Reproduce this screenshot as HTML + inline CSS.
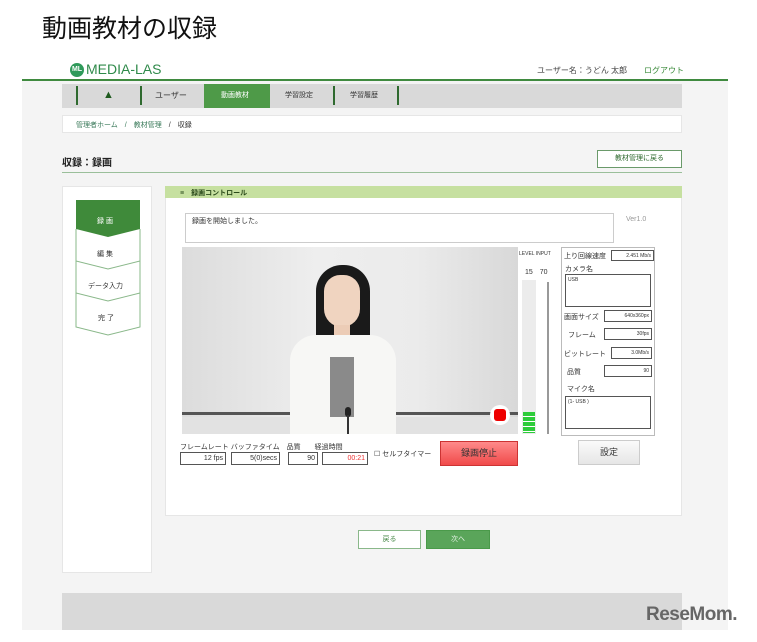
<!DOCTYPE html>
<html><head><meta charset="utf-8"><style>
*{margin:0;padding:0;box-sizing:border-box}
body{width:757px;height:642px;background:#fff;position:relative;overflow:hidden;font-family:"Liberation Sans","Noto Sans CJK JP",sans-serif;color:#333}
.a{position:absolute}
.t{font-size:8px;white-space:nowrap}
.inp{position:absolute;border:1.5px solid #555;background:#fff;font-size:7px;text-align:right;padding-right:2px;line-height:11px}
</style></head><body>
<div class="a" style="left:42px;top:9px;font-size:25px;color:#111;font-family:'Noto Sans CJK JP',sans-serif">動画教材の収録</div>
<div class="a" style="left:22px;top:80px;width:706px;height:550px;background:#f4f4f4"></div>
<div class="a" style="left:22px;top:79px;width:706px;height:2px;background:#3f8a3f"></div>
<!-- logo -->
<div class="a" style="left:70px;top:63px;width:14px;height:14px;border-radius:50%;background:#2f9a5a;color:#fff;font-size:7px;line-height:14px;text-align:center;font-weight:bold">ML</div>
<div class="a" style="left:86px;top:61px;font-size:14px;color:#2f8a4a">MEDIA-LAS</div>
<div class="a t" style="left:537px;top:65px;font-size:8px;color:#444">ユーザー名：うどん 太郎</div>
<div class="a t" style="left:644px;top:65px;font-size:8px;color:#3a8a3a">ログアウト</div>
<!-- nav -->
<div class="a" style="left:62px;top:84px;width:620px;height:24px;background:#d9d9d9"></div>
<div class="a" style="left:204px;top:84px;width:66px;height:24px;background:#4e9a48"></div>
<div class="a" style="left:76px;top:86px;width:2px;height:19px;background:#2f6a2f"></div>
<div class="a" style="left:140px;top:86px;width:2px;height:19px;background:#2f6a2f"></div>
<div class="a" style="left:333px;top:86px;width:2px;height:19px;background:#2f6a2f"></div>
<div class="a" style="left:397px;top:86px;width:2px;height:19px;background:#2f6a2f"></div>
<div class="a" style="left:103px;top:89px;color:#1e5a1e;font-size:11px">&#9650;</div>
<div class="a t" style="left:155px;top:90px">ユーザー</div>
<div class="a t" style="left:221px;top:90px;color:#fff;font-size:7px">動画教材</div>
<div class="a t" style="left:285px;top:90px;font-size:7px">学習設定</div>
<div class="a t" style="left:350px;top:90px;font-size:7px">学習履歴</div>
<!-- breadcrumb -->
<div class="a" style="left:62px;top:115px;width:620px;height:18px;background:#fff;border:1px solid #e6e6e6"></div>
<div class="a t" style="left:76px;top:120px;font-size:7px;color:#3a7a5a">管理者ホーム　/　教材管理　<span style="color:#333">/　収録</span></div>
<!-- title -->
<div class="a t" style="left:62px;top:154px;font-size:10px;font-weight:bold;color:#222">収録：録画</div>
<div class="a" style="left:62px;top:172px;width:620px;height:1px;background:#9abf9a"></div>
<div class="a t" style="left:597px;top:150px;width:85px;height:18px;background:#fff;border:1px solid #6a9a6a;font-size:7px;line-height:16px;text-align:center;color:#2f6a2f">教材管理に戻る</div>
<!-- left nav -->
<div class="a" style="left:62px;top:186px;width:90px;height:387px;background:#fff;border:1px solid #e6e6e6"></div>
<svg class="a" style="left:75px;top:199px" width="66" height="140">
<polygon points="1,1 65,1 65,30 33,38 1,30" fill="#3f8a3a"/>
<g fill="none" stroke="#8ab88a" stroke-width="1">
<polyline points="1,30 1,62 33,70 65,62 65,30"/>
<polyline points="1,62 1,94 33,102 65,94 65,62"/>
<polyline points="1,94 1,128 33,136 65,128 65,94"/>
</g></svg>
<div class="a t" style="left:97px;top:216px;color:#fff;font-size:7px">録 画</div>
<div class="a t" style="left:97px;top:249px;font-size:7px">編 集</div>
<div class="a t" style="left:88px;top:281px;font-size:7px">データ入力</div>
<div class="a t" style="left:98px;top:313px;font-size:7px">完 了</div>
<!-- main panel -->
<div class="a" style="left:165px;top:186px;width:517px;height:330px;background:#fff;border:1px solid #e6e6e6"></div>
<div class="a" style="left:165px;top:186px;width:517px;height:12px;background:#c6e0a0"></div>
<div class="a t" style="left:180px;top:188px;font-size:7px;font-weight:bold;color:#2a4a1a">≡　録画コントロール</div>
<div class="a" style="left:185px;top:213px;width:429px;height:30px;border:1px solid #ccc"></div>
<div class="a t" style="left:192px;top:216px;font-size:7px">録画を開始しました。</div>
<div class="a t" style="left:626px;top:216px;font-size:7px;color:#999">Ver1.0</div>
<!-- video -->
<div class="a" style="left:182px;top:247px;width:336px;height:187px;background:linear-gradient(90deg,#dcdcdc,#eeeeee 40%,#ebebeb 70%,#d8d8d8);overflow:hidden">
 <div class="a" style="left:0;top:165px;width:336px;height:3px;background:#555"></div>
 <div class="a" style="left:0;top:170px;width:336px;height:17px;background:#e2e2e2"></div>
 <div class="a" style="left:134px;top:18px;width:54px;height:80px;background:#1a1a1a;border-radius:26px 26px 8px 8px"></div>
 <div class="a" style="left:142px;top:28px;width:36px;height:52px;background:#f0d4c0;border-radius:18px 18px 20px 20px"></div>
 <div class="a" style="left:152px;top:78px;width:16px;height:14px;background:#ecccb6"></div>
 <div class="a" style="left:108px;top:88px;width:106px;height:110px;background:#f7f7f5;border-radius:26px 26px 0 0"></div>
 <div class="a" style="left:148px;top:110px;width:24px;height:60px;background:#8a8a8a"></div>
 <div class="a" style="left:163px;top:160px;width:6px;height:10px;background:#222;border-radius:3px"></div>
 <div class="a" style="left:165px;top:168px;width:2px;height:20px;background:#333"></div>
 <div class="a" style="left:308px;top:158px;width:20px;height:20px;border-radius:50%;background:#fff"></div>
 <div class="a" style="left:312px;top:162px;width:12px;height:12px;border-radius:3px;background:#e00"></div>
</div>
<!-- meters -->
<div class="a t" style="left:519px;top:251px;font-size:5px">LEVEL INPUT</div>
<div class="a t" style="left:525px;top:267px;font-size:7px">15　70</div>
<div class="a" style="left:522px;top:280px;width:14px;height:154px;background:#ececec"></div>
<div class="a" style="left:523px;top:412px;width:12px;height:21px;background:repeating-linear-gradient(#2dcc3a 0 4px,#fff 4px 5px)"></div>
<div class="a" style="left:547px;top:282px;width:2px;height:152px;background:#999"></div>
<!-- settings -->
<div class="a" style="left:561px;top:247px;width:94px;height:189px;border:1px solid #bbb;background:#fff"></div>
<div class="a t" style="left:564px;top:251px;font-size:7px">上り回線速度</div>
<div class="inp" style="left:611px;top:250px;width:43px;height:11px;font-size:5px">2.451 Mb/s</div>
<div class="a t" style="left:565px;top:264px;font-size:7px">カメラ名</div>
<div class="inp" style="left:565px;top:274px;width:86px;height:33px;text-align:left;padding-left:2px;font-size:5px">USB</div>
<div class="a t" style="left:564px;top:312px;font-size:7px">画面サイズ</div>
<div class="inp" style="left:604px;top:310px;width:48px;height:12px;font-size:5px">640x360px</div>
<div class="a t" style="left:568px;top:330px;font-size:7px">フレーム</div>
<div class="inp" style="left:604px;top:328px;width:48px;height:12px;font-size:5px">30fps</div>
<div class="a t" style="left:564px;top:349px;font-size:7px">ビットレート</div>
<div class="inp" style="left:611px;top:347px;width:41px;height:12px;font-size:5px">3.0Mb/s</div>
<div class="a t" style="left:567px;top:367px;font-size:7px">品質</div>
<div class="inp" style="left:604px;top:365px;width:48px;height:12px;font-size:5px">90</div>
<div class="a t" style="left:567px;top:384px;font-size:7px">マイク名</div>
<div class="inp" style="left:565px;top:396px;width:86px;height:33px;text-align:left;padding-left:2px;font-size:5px">(1- USB )</div>
<!-- controls -->
<div class="a t" style="left:180px;top:442px;font-size:7px">フレームレート バッファタイム　品質　　経過時間</div>
<div class="inp" style="left:180px;top:452px;width:46px;height:13px;font-size:7px">12 fps</div>
<div class="inp" style="left:231px;top:452px;width:49px;height:13px;font-size:7px">5(0)secs</div>
<div class="inp" style="left:288px;top:452px;width:30px;height:13px;font-size:7px">90</div>
<div class="inp" style="left:322px;top:452px;width:46px;height:13px;font-size:7px;color:#e33">00:21</div>
<div class="a t" style="left:374px;top:449px;font-size:7px">☐ セルフタイマー</div>
<div class="a t" style="left:440px;top:441px;width:78px;height:25px;background:linear-gradient(#ff8a8a,#f04a4a);border:1px solid #c33;text-align:center;line-height:23px;font-size:9px;color:#333">録画停止</div>
<div class="a t" style="left:578px;top:440px;width:62px;height:25px;background:linear-gradient(#fafafa,#e6e6e6);border:1px solid #ccc;text-align:center;line-height:23px;font-size:9px">設定</div>
<!-- bottom buttons -->
<div class="a t" style="left:358px;top:530px;width:63px;height:19px;background:#fff;border:1px solid #8ab88a;text-align:center;line-height:17px;font-size:7px;color:#4a8a4a">戻る</div>
<div class="a t" style="left:426px;top:530px;width:64px;height:19px;background:#5aa55a;border:1px solid #4a9a4a;text-align:center;line-height:17px;font-size:7px;color:#e8f4e8">次へ</div>
<!-- footer -->
<div class="a" style="left:62px;top:593px;width:620px;height:37px;background:#d9d9d9"></div>
<div class="a" style="left:646px;top:604px;font-size:19px;font-weight:bold;color:#666;letter-spacing:-0.5px">ReseMom.</div>
</body></html>
